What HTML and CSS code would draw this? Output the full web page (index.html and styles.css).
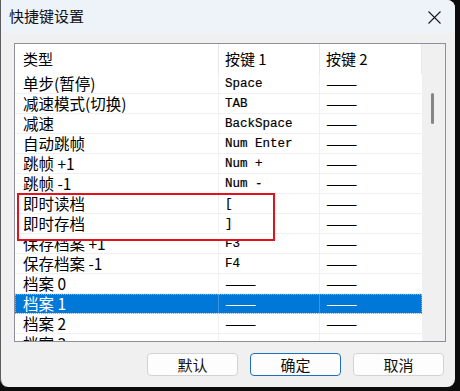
FILE: index.html
```html
<!DOCTYPE html>
<html lang="zh-CN">
<head>
    <meta charset="UTF-8">
    <title>快捷键设置</title>
    <link rel="stylesheet" href="styles.css">
</head>
<body>

    <div class="window">
        <!-- Title bar -->
        <div class="titlebar">
            <span class="title">快捷键设置</span>
            <svg class="close" width="13" height="13" viewBox="0 0 13 13">
                <path d="M0.5 0.5 L12.5 12.5 M12.5 0.5 L0.5 12.5" stroke="#1a1a1a" stroke-width="1.1" fill="none"/>
            </svg>
        </div>

        <!-- Key list -->
        <div class="list">
            <div class="rows">
                <div class="header">
                    <div class="cell">类型</div>
                    <div class="cell">按键 1</div>
                    <div class="cell">按键 2</div>
                </div>
                <div class="row"><div class="cell">单步(暂停)</div><div class="cell key">Space</div><div class="cell"><span class="dash">——</span></div></div>
                <div class="row"><div class="cell">减速模式(切换)</div><div class="cell key">TAB</div><div class="cell"><span class="dash">——</span></div></div>
                <div class="row"><div class="cell">减速</div><div class="cell key">BackSpace</div><div class="cell"><span class="dash">——</span></div></div>
                <div class="row"><div class="cell">自动跳帧</div><div class="cell key">Num Enter</div><div class="cell"><span class="dash">——</span></div></div>
                <div class="row"><div class="cell">跳帧 +1</div><div class="cell key">Num +</div><div class="cell"><span class="dash">——</span></div></div>
                <div class="row"><div class="cell">跳帧 -1</div><div class="cell key">Num -</div><div class="cell"><span class="dash">——</span></div></div>
                <div class="row"><div class="cell">即时读档</div><div class="cell key">[</div><div class="cell"><span class="dash">——</span></div></div>
                <div class="row"><div class="cell">即时存档</div><div class="cell key">]</div><div class="cell"><span class="dash">——</span></div></div>
                <div class="row"><div class="cell">保存档案 +1</div><div class="cell key">F3</div><div class="cell"><span class="dash">——</span></div></div>
                <div class="row"><div class="cell">保存档案 -1</div><div class="cell key">F4</div><div class="cell"><span class="dash">——</span></div></div>
                <div class="row"><div class="cell">档案 0</div><div class="cell"><span class="dash">——</span></div><div class="cell"><span class="dash">——</span></div></div>
                <div class="row selected"><div class="cell">档案 1</div><div class="cell"><span class="dash">——</span></div><div class="cell"><span class="dash">——</span></div></div>
                <div class="row"><div class="cell">档案 2</div><div class="cell"><span class="dash">——</span></div><div class="cell"><span class="dash">——</span></div></div>
                <div class="row"><div class="cell">档案 3</div><div class="cell"><span class="dash">——</span></div><div class="cell"><span class="dash">——</span></div></div>
            </div>

            <!-- Scrollbar -->
            <div class="scrollbar">
                <div class="thumb"></div>
            </div>

            <!-- Annotation box -->
            <div class="mark"></div>
        </div>

        <!-- Buttons -->
        <div class="buttons">
            <button class="btn">默认</button>
            <button class="btn default">确定</button>
            <button class="btn">取消</button>
        </div>
    </div>

</body>
</html>
```

FILE: styles.css
```css
body {
    margin: 0;
    padding: 0;
    background-color: #0c0c0c;
    font-family: "Noto Sans CJK SC", "Liberation Sans", sans-serif;
}

/* Dialog window */
.window {
    width: 455px;
    height: 387px;
    background-color: #f0f0f0;
    border-left: 1px solid #5c5c5c;
    border-radius: 0 8px 8px 8px;
    box-sizing: border-box;
    overflow: hidden;
}

.titlebar {
    height: 33px;
    background-color: #eef2f9;
    display: flex;
    align-items: center;
    justify-content: space-between;
    padding: 0 14px 0 8px;
}

.title {
    font-size: 15px;
    color: #111;
    margin-top: -2px;
}

.close {
    margin-top: 1px;
}

/* List box */
.list {
    position: relative;
    display: flex;
    margin: 10px 9px 0 13px;
    height: 299px;
    border: 1px solid #8d9096;
    box-sizing: border-box;
    background-color: #fff;
}

.rows {
    width: 407px;
    overflow: hidden;
}

.header, .row {
    display: grid;
    grid-template-columns: 204px 101px 102px;
    font-size: 15.5px;
    color: #000;
}

.header {
    height: 30px;
    line-height: 30px;
    font-size: 15px;
}

.header .cell {
    border-right: 1px solid #e8e8e8;
}

.row {
    height: 20px;
    line-height: 19px;
    border-bottom: 1px solid #f0f0f0;
    box-sizing: border-box;
}

.row .cell {
    border-right: 1px solid #f0f0f0;
}

.row .cell:last-child {
    border-right: none;
}

.cell {
    padding-left: 6px;
    white-space: nowrap;
}

.header .cell:first-child, .row .cell:first-child {
    padding-left: 8px;
}

.key {
    font-family: "Liberation Mono", monospace;
    font-size: 12.5px;
    line-height: 20px;
    color: #000;
    -webkit-text-stroke: 0.2px #000;
}

.dash {
    display: inline-block;
    font-size: 15px;
    font-family: "Noto Sans CJK SC", sans-serif;
    transform: scaleX(1.25);
    transform-origin: left center;
}

.selected {
    background-color: #0078d7;
    color: #fff;
    outline: 1px dotted #d9a066;
    outline-offset: -1px;
}

.selected .cell {
    border-right-color: #3d95e0;
}

/* Scrollbar */
.scrollbar {
    position: relative;
    flex: 1;
    background-color: #f0f0f0;
}

.thumb {
    position: absolute;
    left: 9px;
    top: 49px;
    width: 3px;
    height: 31px;
    border-radius: 2px;
    background-color: #858585;
}

/* Red annotation rectangle */
.mark {
    position: absolute;
    left: 2px;
    top: 149px;
    width: 258px;
    height: 48px;
    border: 2px solid #e3101e;
    box-sizing: border-box;
    background: linear-gradient(transparent 39px, #fff 39px);
}

/* Buttons */
.buttons {
    display: flex;
    justify-content: flex-end;
    gap: 12px;
    padding: 11px 11px 0 0;
}

.btn {
    width: 91px;
    height: 23px;
    padding: 0;
    font-family: "Noto Sans CJK SC", sans-serif;
    font-size: 15px;
    line-height: 21px;
    color: #111;
    background-color: #fdfdfd;
    border: 1px solid #d3d3d3;
    border-radius: 4px;
}

.btn.default {
    border: 1.5px solid #1f6fc0;
}
```
